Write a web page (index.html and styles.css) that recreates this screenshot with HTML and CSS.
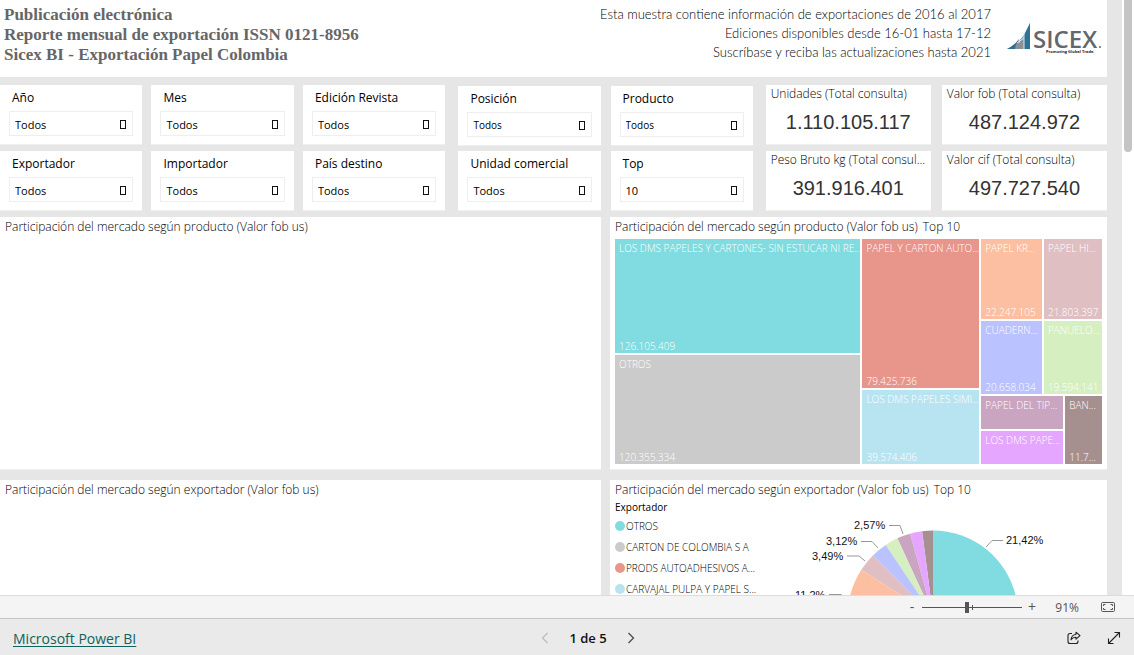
FILE: index.html
```html
<!DOCTYPE html>
<html lang="es">
<head>
<meta charset="utf-8">
<title>Sicex BI - Exportación Papel Colombia</title>
<link rel="stylesheet" href="styles.css">
</head>
<body>
<div class="viewport">
  <main class="report">
    <header class="banner">
      <h1 class="banner-title">Publicación electrónica<br>Reporte mensual de exportación ISSN 0121-8956<br>Sicex BI - Exportación Papel Colombia</h1>
      <p class="banner-note">Esta muestra contiene información de exportaciones de 2016 al 2017<br>Ediciones disponibles desde 16-01 hasta 17-12<br>Suscríbase y reciba las actualizaciones hasta 2021</p>
      <svg class="logo" width="96" height="36" viewBox="0 0 96 36" role="img" aria-label="Sicex">
        <path d="M0 28C11 23 19 14 23 2V28Z" fill="#6f97b4"/>
        <path d="M0 28C6 25 9 22 12 18V28Z" fill="#2f6f95"/>
        <path d="M8 28L9 23L14 19L17 21V28Z" fill="#8b9196"/>
        <path d="M17 14L23 2V28H17Z" fill="#2a7596"/>
        <path d="M12 18V22M17 12V28M10 22L17 17" stroke="#dfe8ee" stroke-width="1" fill="none"/>
        <text class="logo-name" x="26" y="27">SICEX</text>
        <circle cx="93" cy="26" r="1" fill="#63686c"/>
        <text class="logo-tag" x="39" y="32">Promoting Global Trade.</text>
      </svg>
    </header>

    <section class="controls">
      <div class="group group-a">
        <div class="card"><label for="f1">Año</label><span class="pick"><select id="f1"><option>Todos</option></select></span></div>
        <div class="card"><label for="f2">Mes</label><span class="pick"><select id="f2"><option>Todos</option></select></span></div>
        <div class="card"><label for="f3">Edición Revista</label><span class="pick"><select id="f3"><option>Todos</option></select></span></div>
        <div class="card"><label for="f4">Exportador</label><span class="pick"><select id="f4"><option>Todos</option></select></span></div>
        <div class="card"><label for="f5">Importador</label><span class="pick"><select id="f5"><option>Todos</option></select></span></div>
        <div class="card"><label for="f6">País destino</label><span class="pick"><select id="f6"><option>Todos</option></select></span></div>
      </div>
      <div class="group group-b">
        <div class="card"><label for="f7">Posición</label><span class="pick small"><select id="f7"><option>Todos</option></select></span></div>
        <div class="card"><label for="f8">Producto</label><span class="pick small"><select id="f8"><option>Todos</option></select></span></div>
        <div class="card"><label for="f9">Unidad comercial</label><span class="pick"><select id="f9"><option>Todos</option></select></span></div>
        <div class="card"><label for="f10">Top</label><span class="pick"><select id="f10"><option>10</option></select></span></div>
      </div>
      <div class="group group-c">
        <div class="card kpi"><h2>Unidades (Total consulta)</h2><p>1.110.105.117</p></div>
        <div class="card kpi"><h2>Valor fob (Total consulta)</h2><p>487.124.972</p></div>
        <div class="card kpi"><h2>Peso Bruto kg (Total consul...</h2><p>391.916.401</p></div>
        <div class="card kpi"><h2>Valor cif (Total consulta)</h2><p>497.727.540</p></div>
      </div>
    </section>

    <section class="panels">
      <article class="panel"><h2>Participación del mercado según producto (Valor fob us)</h2></article>
      <article class="panel">
        <h2>Participación del mercado según producto (Valor fob us) <span class="top">Top 10</span></h2>
        <div class="treemap">
          <div class="stack stack-1">
            <div class="tile teal t-a"><span>LOS DMS PAPELES Y CARTONES- SIN ESTUCAR NI RE...</span><span>126.105.409</span></div>
            <div class="tile gray t-b"><span>OTROS</span><span>120.355.334</span></div>
          </div>
          <div class="stack stack-2">
            <div class="tile red t-c"><span>PAPEL Y CARTON AUTO...</span><span>79.425.736</span></div>
            <div class="tile sky t-d"><span>LOS DMS PAPELES SIMI...</span><span>39.574.406</span></div>
          </div>
          <div class="stack stack-3">
            <div class="band band-1">
              <div class="tile orange t-e"><span>PAPEL KR...</span><span>22.247.105</span></div>
              <div class="tile pink t-f"><span>PAPEL HI...</span><span>21.803.397</span></div>
            </div>
            <div class="band band-2">
              <div class="tile blue t-e"><span>CUADERN...</span><span>20.658.034</span></div>
              <div class="tile green t-f"><span>PANUELO...</span><span>19.594.141</span></div>
            </div>
            <div class="band band-3">
              <div class="stack stack-4">
                <div class="tile mauve t-g"><span>PAPEL DEL TIP...</span></div>
                <div class="tile violet t-g"><span>LOS DMS PAPE...</span></div>
              </div>
              <div class="tile brown t-h"><span>BAN...</span><span>11.7...</span></div>
            </div>
          </div>
        </div>
      </article>
      <article class="panel"><h2>Participación del mercado según exportador (Valor fob us)</h2></article>
      <article class="panel">
        <h2>Participación del mercado según exportador (Valor fob us) <span class="top">Top 10</span></h2>
        <div class="pie-area">
          <div class="legend">
            <h3>Exportador</h3>
            <ul>
              <li><i class="dot teal"></i>OTROS</li>
              <li><i class="dot gray"></i>CARTON DE COLOMBIA S A</li>
              <li><i class="dot red"></i>PRODS AUTOADHESIVOS A...</li>
              <li><i class="dot sky"></i>CARVAJAL PULPA Y PAPEL S...</li>
            </ul>
          </div>
          <svg class="pie" width="280" height="201" viewBox="0 0 280 201" role="img" aria-label="Participación por exportador">
            <path fill="#80dce0" d="M153 115.500V30.500A85 85 0 0 1 235.900 96.500Z"/>
            <path fill="#a68f8f" d="M153 115.500V30.500A85 85 0 0 0 142.100 31.200Z"/>
            <path fill="#e5a6ff" d="M153 115.500L142.100 31.200A85 85 0 0 0 130 33.700Z"/>
            <path fill="#c9a5c1" d="M153 115.500L130 33.700A85 85 0 0 0 117.300 38.300Z"/>
            <path fill="#d5efc0" d="M153 115.500L117.300 38.300A85 85 0 0 0 105.700 44.900Z"/>
            <path fill="#bac2ff" d="M153 115.500L105.700 44.900A85 85 0 0 0 92.900 55.400Z"/>
            <path fill="#dfbfc2" d="M153 115.500L92.900 55.400A85 85 0 0 0 81.300 69.800Z"/>
            <path fill="#fdbfa2" d="M153 115.500L81.300 69.800A85 85 0 0 0 68.800 127.300Z"/>
            <g class="leaders">
              <path d="M223 40.500H212L206 47"/>
              <path d="M109 25.500H120L123 34"/>
              <path d="M81 41.500H92L98 48"/>
              <path d="M67 56H79L85 61"/>
              <path d="M49 94.500H61L67 99"/>
            </g>
            <g class="shares">
              <text x="226" y="44">21,42%</text>
              <text x="74" y="29">2,57%</text>
              <text x="46" y="45">3,12%</text>
              <text x="32" y="60">3,49%</text>
              <text x="15" y="99">11,2%</text>
            </g>
          </svg>
        </div>
      </article>
    </section>
  </main>
  <div class="scrollbar"><div class="thumb"></div></div>
</div>

<div class="zoombar">
  <button class="step" aria-label="Alejar">-</button>
  <span class="slider"><input type="range" min="0" max="100" value="45" aria-label="Zoom"></span>
  <button class="step" aria-label="Acercar">+</button>
  <span class="percent">91%</span>
  <button class="icon" aria-label="Ajustar a la página">
    <svg width="16" height="12" viewBox="0 0 16 12" fill="none" stroke="#555"><rect x="1.500" y="1.500" width="13" height="9" rx="1"/><path d="M5.500 3.500H3.500V5M3.500 7V8.500H5.500M10.500 3.500H12.500V5M12.500 7V8.500H10.500"/></svg>
  </button>
</div>

<footer class="footer">
  <a href="#">Microsoft Power BI</a>
  <nav class="pager">
    <button class="icon" aria-label="Página anterior" disabled><svg width="8" height="12" viewBox="0 0 8 12" fill="none" stroke="#bcbcbc" stroke-width="1.200"><path d="M6.500 1L1.500 6L6.500 11"/></svg></button>
    <span>1 de 5</span>
    <button class="icon" aria-label="Página siguiente"><svg width="8" height="12" viewBox="0 0 8 12" fill="none" stroke="#444" stroke-width="1.200"><path d="M1.500 1L6.500 6L1.500 11"/></svg></button>
  </nav>
  <div class="actions">
    <button class="icon" aria-label="Compartir"><svg width="14" height="14" viewBox="0 0 14 14" fill="none" stroke="#222" stroke-width="1.100" stroke-linejoin="round"><path d="M5 2.500H3Q1 2.500 1 4.500V10.500Q1 12.500 3 12.500H9Q11 12.500 11 10.500V9.500"/><path d="M9 1.200L13 4.700L9 8.200V6.200Q6 6 4 8.800Q4.500 4 9 3.300Z"/></svg></button>
    <button class="icon" aria-label="Pantalla completa"><svg width="14" height="14" viewBox="0 0 14 14" fill="none" stroke="#222" stroke-width="1.100"><path d="M1.500 12.500L12.500 1.500M7.500 1.500H12.500V6.500M1.500 7.500V12.500H6.500"/></svg></button>
  </div>
</footer>
</body>
</html>
```
FILE: styles.css
```css
*, *::before, *::after { box-sizing: border-box; }

body {
  margin: 0;
  height: 100vh;
  display: flex;
  flex-direction: column;
  overflow: hidden;
  font-family: "Open Sans", "Noto Sans", sans-serif;
  font-size: 12px;
  color: #000;
  background: #fff;
}

h1, h2, h3, p, ul { margin: 0; padding: 0; font-weight: 400; }
button { border: 0; background: none; padding: 0; font: inherit; color: inherit; }
svg { display: block; }

.viewport { flex: 1; min-height: 0; display: flex; overflow: hidden; }
.report { flex: 1; min-width: 0; background: #e6e6e6; padding-right: 15px; }

.banner {
  display: flex;
  align-items: flex-start;
  background: #fff;
  height: 77px;
  padding: 5px 4px 0;
}
.banner-title {
  flex: 1;
  font: bold 17px/20px "Liberation Serif", serif;
  color: #666;
}
.banner-note { font: 300 13px/19px Lato, "Open Sans", sans-serif; text-align: right; color: #000; }
.logo { margin: 16px 0 0 16px; }
.logo-name { font: 600 24px "Open Sans", sans-serif; fill: #63686c; }
.logo-tag { font: bold 4px "Open Sans", sans-serif; fill: #222; }

.controls { display: flex; gap: 13px; padding-top: 8px; }
.group { display: grid; }
.group-a { flex: 445; grid-template-columns: repeat(3, 1fr); gap: 6px 9px; }
.group-b { flex: 294; grid-template-columns: repeat(2, 1fr); gap: 5px 10px; padding-top: 1px; }
.group-c { flex: 341; grid-template-columns: repeat(2, 1fr); gap: 6px 11px; }

.card {
  min-width: 0;
  height: 60px;
  background: #fff;
  border-bottom: 1px solid #f0f0f0;
  padding: 4px 9px 0;
}
.card label { display: block; padding-left: 3px; line-height: 18px; }
.pick { display: block; position: relative; margin-top: 4px; }
.pick::after {
  content: "";
  position: absolute;
  right: 7px;
  top: 9px;
  width: 6px;
  height: 9px;
  border: 1px solid #111;
  pointer-events: none;
}
.pick select {
  display: block;
  width: 100%;
  height: 25px;
  appearance: none;
  border: 1px solid #eee;
  border-radius: 0;
  background: #fff;
  padding: 1px 5px 0;
  font: 11px "Open Sans", sans-serif;
  color: #000;
}
.pick.small select { font-size: 10px; }

.kpi { padding: 0 5px; }
.kpi h2 { font-size: 12px; font-weight: 300; line-height: 18px; white-space: nowrap; }
.kpi p { font: 20px/24px "Liberation Sans", sans-serif; color: #333; text-align: center; margin-top: 7px; }

.panels {
  display: grid;
  grid-template-columns: 601fr 497fr;
  grid-auto-rows: 253px;
  gap: 10px 9px;
  padding-top: 6px;
}
.panel { min-width: 0; background: #fff; border-bottom: 1px solid #f0f0f0; padding: 0 5px 5px; display: flex; flex-direction: column; }
.panel h2 { font-size: 12px; font-weight: 300; line-height: 20px; white-space: nowrap; }
.top { padding-left: 2px; }

.treemap { flex: 1; display: flex; gap: 2px; padding-top: 2px; }
.stack { display: flex; flex-direction: column; gap: 2px; min-width: 0; }
.stack-1 { flex: 246 0 0; }
.stack-2 { flex: 117 0 0; }
.stack-3 { flex: 121 0 0; }
.stack-4 { flex: 85 0 0; }
.band { display: flex; gap: 2px; min-height: 0; }
.band-1 { flex: 81 0 0; }
.band-2 { flex: 74 0 0; }
.band-3 { flex: 69 0 0; }
.tile {
  min-width: 0;
  min-height: 0;
  display: flex;
  flex-direction: column;
  justify-content: space-between;
  padding: 3px 0 0 4px;
  color: #fff;
  font-size: 10px;
  font-weight: 300;
  line-height: 13px;
  white-space: nowrap;
  overflow: hidden;
}
.t-a { flex: 115 0 0; }
.t-b { flex: 110 0 0; }
.t-c { flex: 151 0 0; }
.t-d { flex: 73 0 0; }
.t-e { flex: 61 0 0; }
.t-f { flex: 58 0 0; }
.t-g { flex: 1 0 0; }
.t-h { flex: 34 0 0; }

.teal { background: #80dce0; }
.gray { background: #cbcbcb; }
.red { background: #e8958c; }
.sky { background: #b8e4f2; }
.orange { background: #fdbfa2; }
.pink { background: #dfbfc2; }
.blue { background: #bac2ff; }
.green { background: #d5efc0; }
.mauve { background: #c9a5c1; }
.violet { background: #e5a6ff; }
.brown { background: #a68f8f; }

.pie-area { display: flex; justify-content: space-between; padding-right: 42px; }
.legend h3 { font-size: 10px; line-height: 15px; }
.legend ul { list-style: none; }
.legend li { display: flex; align-items: center; gap: 1px; height: 21px; font-size: 10px; font-weight: 300; white-space: nowrap; }
.dot { width: 10px; height: 10px; border-radius: 50%; }
.leaders path { fill: none; stroke: #999; }
.shares text { font: 11px "Liberation Sans", sans-serif; fill: #111; }

.scrollbar { width: 12px; padding: 0 2px; background: #fff; }
.thumb { height: 152px; border-radius: 0 0 4px 4px; background: #c4c4c4; }

.zoombar {
  display: flex;
  align-items: center;
  justify-content: flex-end;
  height: 23px;
  background: #f4f4f4;
  border-top: 1px solid #dcdcdc;
  padding-right: 18px;
  color: #555;
}
.step { width: 12px; font-size: 14px; line-height: 20px; }
.slider { position: relative; width: 100px; margin: 0 4px; }
.slider::after {
  content: "";
  position: absolute;
  left: 50%;
  top: 50%;
  width: 1px;
  height: 5px;
  margin-top: -2px;
  background: #555;
}
.slider input {
  display: block;
  appearance: none;
  width: 100%;
  height: 12px;
  margin: 0;
  background: linear-gradient(#555, #555) center / 100% 1px no-repeat;
}
.slider input::-webkit-slider-thumb { appearance: none; width: 4px; height: 11px; background: #555; }
.percent { width: 41px; margin-right: 21px; text-align: right; }

.footer {
  display: grid;
  grid-template-columns: 1fr auto 1fr;
  align-items: center;
  height: 37px;
  background: #eaeaea;
  border-top: 1px solid #c4c4c4;
  padding: 2px 13px 0;
  font-size: 13px;
}
.footer a { color: #0d6360; font-size: 14px; text-underline-offset: 2px; }
.pager { display: flex; align-items: center; gap: 20px; padding-left: 42px; font-weight: 600; color: #111; }
.actions { display: flex; justify-content: flex-end; gap: 26px; }
```
